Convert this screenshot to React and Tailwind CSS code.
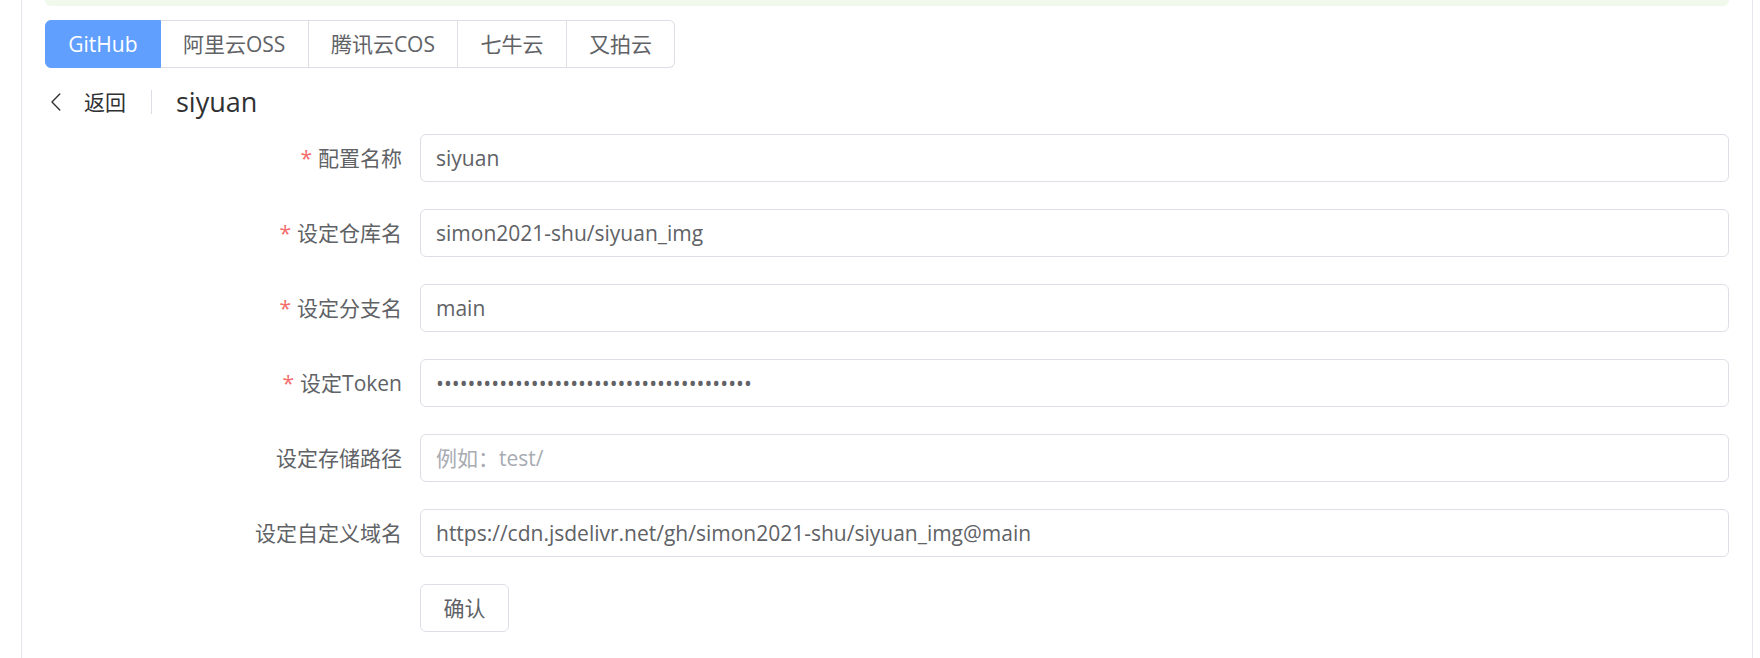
import React from "react";

const tabs = ["GitHub", "阿里云OSS", "腾讯云COS", "七牛云", "又拍云"];

const fields = [
  { label: "配置名称", required: true, value: "siyuan" },
  { label: "设定仓库名", required: true, value: "simon2021-shu/siyuan_img" },
  { label: "设定分支名", required: true, value: "main" },
  { label: "设定Token", required: true, value: "ghp_abcdefghijklmnopqrstuvwxyz0123456789", password: true },
  { label: "设定存储路径", required: false, value: "", placeholder: "例如：test/" },
  { label: "设定自定义域名", required: false, value: "https://cdn.jsdelivr.net/gh/simon2021-shu/siyuan_img@main" },
];

function ArrowLeft() {
  return (
    <svg viewBox="0 0 1024 1024" width="24" height="24" fill="#303133">
      <path d="M609.408 149.376 277.76 489.6a32 32 0 0 0 0 44.672l331.648 340.352a29.12 29.12 0 0 0 41.728 0 30.592 30.592 0 0 0 0-42.752L339.264 511.936l311.872-319.872a30.592 30.592 0 0 0 0-42.688 29.12 29.12 0 0 0-41.728 0z" />
    </svg>
  );
}

export default function App() {
  return (
    <div className="w-full h-[658px] bg-white overflow-hidden font-['Open_Sans','Noto_Sans_CJK_SC',sans-serif]">
      <div className="ml-[21px] w-[1732px] h-full border-x border-[#e4e7ed] px-[23px]">
        <div className="h-[6px] bg-[#f0f9eb] rounded-b-[6px]" />

        <div className="mt-[14px] flex h-[48px]">
          {tabs.map((t, i) => (
            <div
              key={t}
              className={
                "h-[48px] flex items-center px-[22.25px] text-[21px] leading-none border-y border-r " +
                (i === 0
                  ? "bg-[#619fff] text-white border-[#619fff] border-l rounded-l-[6px]"
                  : "bg-white text-[#606266] border-[#dcdfe6]") +
                (i === tabs.length - 1 ? " rounded-r-[6px]" : "")
              }
            >
              {t}
            </div>
          ))}
        </div>

        <div className="mt-[16px] h-[36px] flex items-center">
          <ArrowLeft />
          <span className="ml-[15px] text-[21px] text-[#303133] leading-none">返回</span>
          <div className="mx-[24.5px] w-px h-[24px] bg-[#dcdfe6]" />
          <span className="text-[27px] text-[#303133] leading-none -mt-[2px]">siyuan</span>
        </div>

        <div className="mt-[14px]">
          {fields.map((f) => (
            <div key={f.label} className="flex mb-[27px]">
              <div className="w-[375px] shrink-0 pr-[18px] text-right h-[48px] leading-[48px] text-[21px] text-[#606266]">
                {f.required && <span className="text-[#f56c6c] mr-[6px]">*</span>}
                {f.label}
              </div>
              <input
                type={f.password ? "password" : "text"}
                readOnly
                defaultValue={f.value}
                placeholder={f.placeholder}
                className="flex-1 min-w-0 h-[48px] border border-[#dcdfe6] rounded-[6px] px-[15px] text-[21px] text-[#606266] placeholder:text-[#a8abb2] outline-none bg-white font-['Open_Sans','Noto_Sans_CJK_SC',sans-serif]"
              />
            </div>
          ))}
          <div className="flex">
            <div className="w-[375px] shrink-0" />
            <button className="h-[48px] px-[22.5px] border border-[#dcdfe6] rounded-[6px] bg-white text-[21px] text-[#606266] leading-none">
              确认
            </button>
          </div>
        </div>
      </div>
    </div>
  );
}
